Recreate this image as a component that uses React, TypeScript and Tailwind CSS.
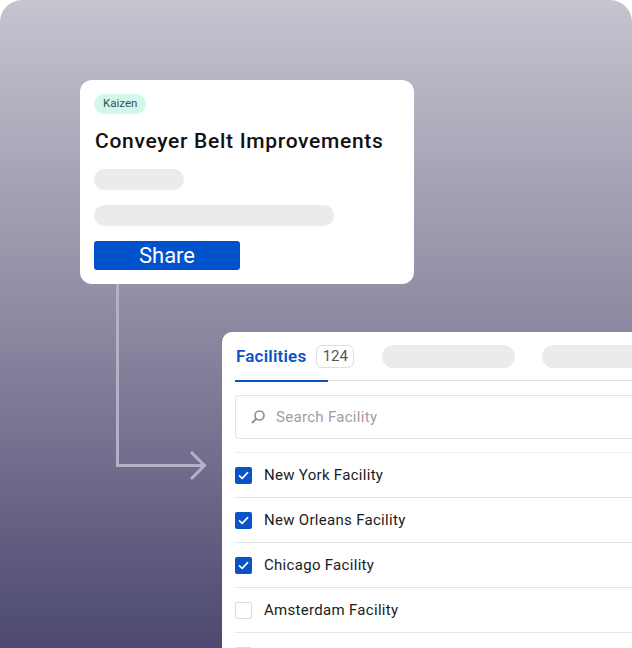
import React from "react";

const rows = [
  { name: "New York Facility", checked: true },
  { name: "New Orleans Facility", checked: true },
  { name: "Chicago Facility", checked: true },
  { name: "Amsterdam Facility", checked: false },
  { name: "", checked: false },
];

function Check({ checked }: { checked: boolean }) {
  return checked ? (
    <div className="w-[17px] h-[17px] rounded-[2px] bg-[#0b52c9] flex items-center justify-center shrink-0">
      <svg width="13" height="13" viewBox="0 0 13 13" fill="none">
        <path d="M2.5 6.8 L5.2 9.4 L10.6 3.6" stroke="white" strokeWidth="1.6" strokeLinecap="round" strokeLinejoin="round" />
      </svg>
    </div>
  ) : (
    <div className="w-[17px] h-[17px] rounded-[2px] border border-[#dcdce0] bg-white shrink-0" />
  );
}

export default function App() {
  return (
    <div className="w-[632px] h-[648px] bg-white" style={{ fontFamily: "Roboto, 'Liberation Sans', sans-serif" }}>
      <div className="relative w-[632px] h-[648px] overflow-hidden rounded-t-[22px] bg-gradient-to-b from-[#c6c4cf] via-[#8d89a2] to-[#4d4970] flex flex-col">
        <svg className="absolute left-0 top-0" width="632" height="648" viewBox="0 0 632 648" fill="none">
          <path d="M117.5 284 L117.5 465.5 L204 465.5" stroke="#b4b1c6" strokeWidth="3" />
          <path d="M191 452 L204.5 465.5 L191 479" stroke="#b4b1c6" strokeWidth="3" />
        </svg>

        <div className="relative ml-[80px] mt-[80px] w-[334px] bg-white rounded-[12px] p-[14px] flex flex-col">
          <div className="self-start h-[20px] px-[9px] rounded-full bg-[#d3f8e9] text-[#3d4a66] text-[11.5px] flex items-center">Kaizen</div>
          <div className="mt-[13px] ml-[1px] text-[21px] leading-[28px] font-medium tracking-[0.7px] text-[#111]">Conveyer Belt Improvements</div>
          <div className="mt-[14px] w-[90px] h-[21px] rounded-full bg-[#ebebeb]" />
          <div className="mt-[15px] w-[240px] h-[21px] rounded-full bg-[#ebebeb]" />
          <div className="mt-[15px] w-[146px] h-[29px] rounded-[3px] bg-[#0052cc] text-white text-[22px] flex items-center justify-center">Share</div>
        </div>

        <div className="relative ml-[222px] mt-[48px] flex-1 bg-white rounded-tl-[10px] pl-[13px] pt-[13px] flex flex-col">
          <div className="flex items-center h-[23px]">
            <span className="text-[17px] font-semibold tracking-[0.2px] text-[#0b52c9] ml-[1px] shrink-0">Facilities</span>
            <span className="ml-[10px] h-[23px] w-[38px] shrink-0 rounded-[6px] border border-[#dedee2] text-[15px] text-[#555] flex items-center justify-center">124</span>
            <div className="ml-[28px] w-[133px] shrink-0 h-[23px] rounded-full bg-[#ebebeb]" />
            <div className="ml-[27px] w-[120px] shrink-0 h-[23px] rounded-full bg-[#ebebeb]" />
          </div>
          <div className="mt-[12px] h-[2px] flex">
            <div className="w-[93px] h-[2px] bg-[#0b52c9]" />
            <div className="flex-1 h-[1px] bg-[#e2e2e6]" />
          </div>
          <div className="mt-[13px] h-[44px] border border-[#e4e4e8] border-r-0 rounded-l-[4px] flex items-center pl-[14px]">
            <svg width="16" height="16" viewBox="0 0 16 16" fill="none">
              <circle cx="9.5" cy="6.5" r="4.5" stroke="#8a8a96" strokeWidth="1.6" />
              <path d="M6.2 9.8 L2.5 13.5" stroke="#8a8a96" strokeWidth="1.8" strokeLinecap="round" />
            </svg>
            <span className="ml-[10px] text-[15px] tracking-[0.3px] text-[#9d9ca8]">Search Facility</span>
          </div>
          <div className="mt-[13px] border-t border-dotted border-[#e4e4e8]" />
          {rows.map((r, i) => (
            <div key={i} className="h-[45px] border-b border-[#e4e4e8] flex items-center shrink-0">
              <Check checked={r.checked} />
              <span className="ml-[12px] text-[15px] tracking-[0.3px] text-[#1b1b1f]">{r.name}</span>
            </div>
          ))}
        </div>
      </div>
    </div>
  );
}
